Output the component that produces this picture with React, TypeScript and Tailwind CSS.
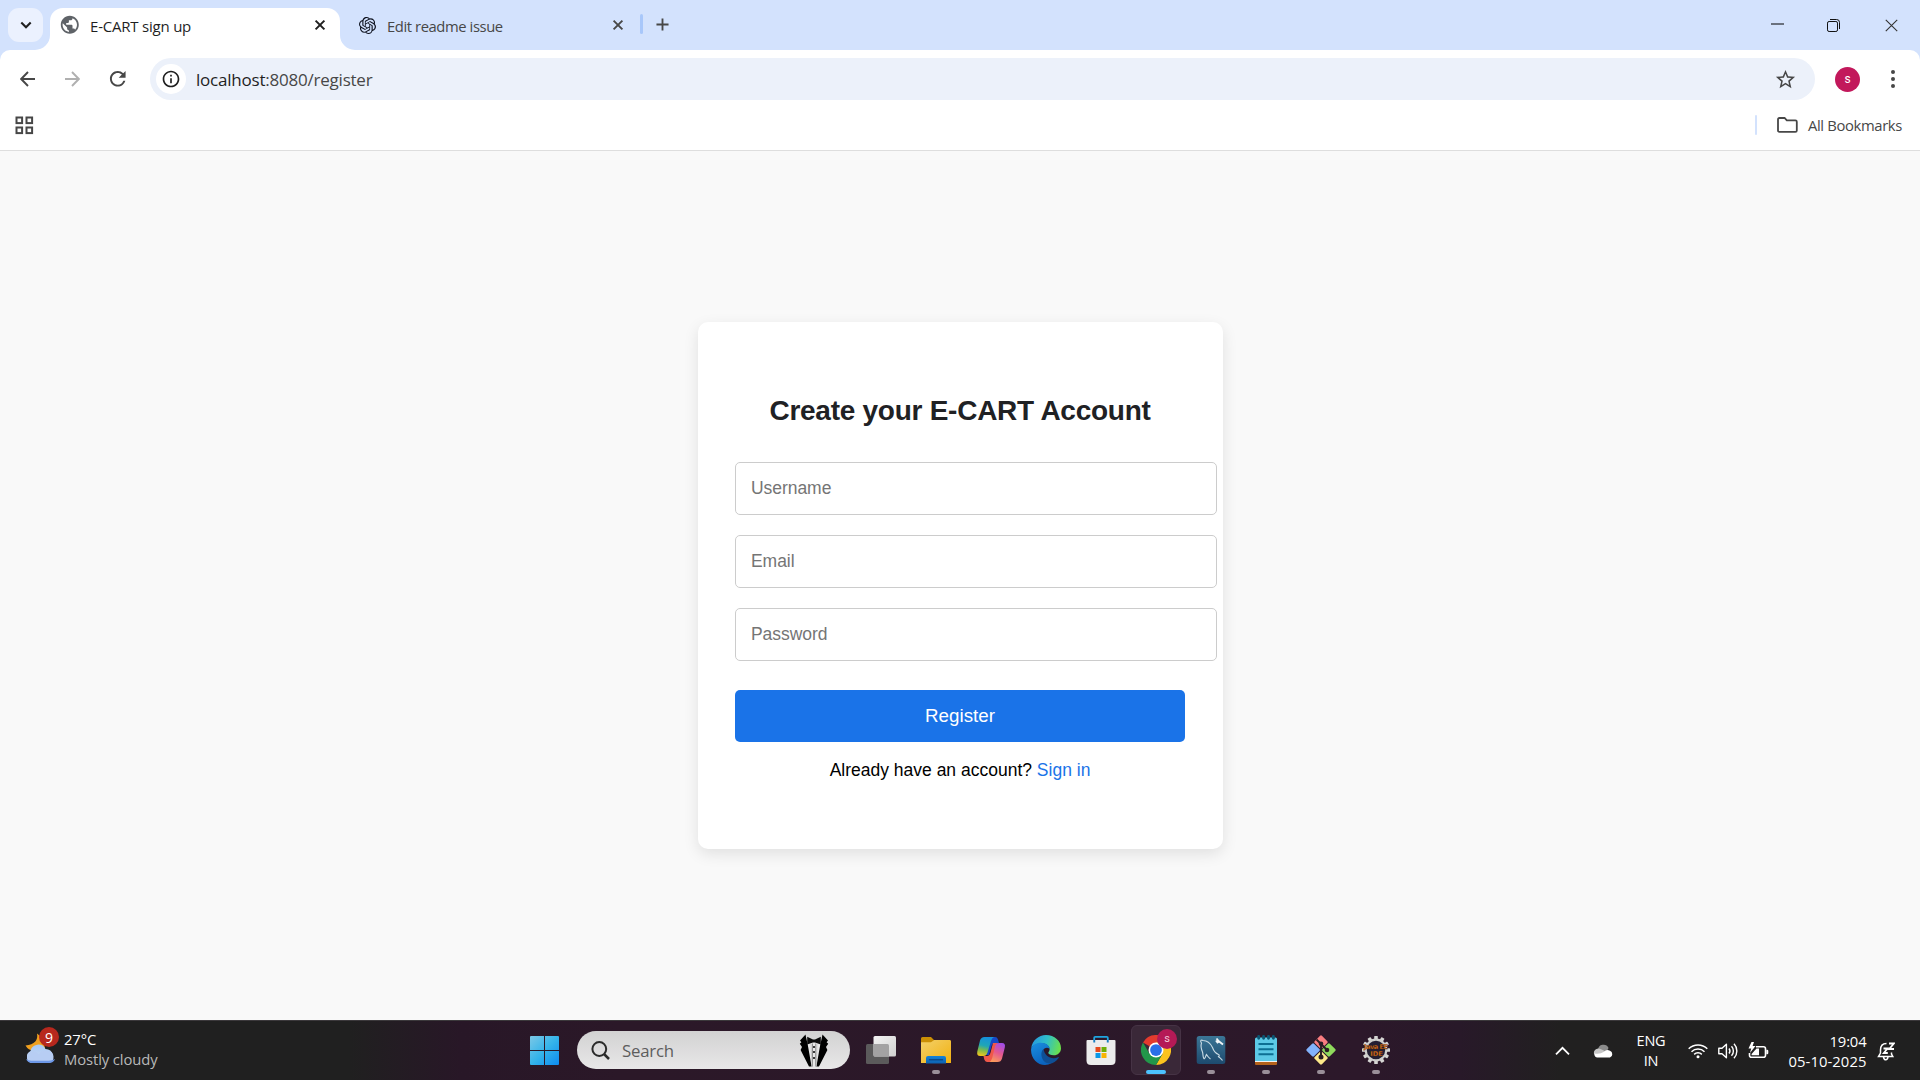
import type { ReactNode } from "react";
import { SiOpenai } from "react-icons/si";
import { MdPublic, MdInfoOutline, MdRefresh, MdStarBorder } from "react-icons/md";

const UI = "font-['Open_Sans','Noto_Sans',sans-serif]";

function Cross({ size, stroke, color }: { size: number; stroke: number; color: string }) {
  return (
    <svg width={size} height={size} viewBox="0 0 10 10" className="overflow-visible">
      <path d="M0.6 0.6 9.4 9.4M9.4 0.6 0.6 9.4" stroke={color} strokeWidth={(stroke * 10) / size} fill="none" />
    </svg>
  );
}

function TabStrip() {
  return (
    <div className="flex h-[50px] shrink-0 bg-[#d3e2fd]">
      <div className="mt-2 ml-2 flex h-[34px] w-[35px] items-center justify-center rounded-[11px] bg-[#ebf1fe]">
        <svg width="12" height="12" viewBox="0 0 12 12">
          <path d="M1.3 3.6 6 8.2 10.7 3.6" stroke="#1f1f1f" strokeWidth="2.1" fill="none" />
        </svg>
      </div>
      <div className="relative mt-[7.5px] ml-[7px] flex h-[42.5px] w-[290px] rounded-t-[13px] bg-white pb-2">
        <svg className="absolute bottom-0 -left-[15px]" width="15" height="15" viewBox="0 0 15 15">
          <path d="M15 0A15 15 0 0 1 0 15H15Z" fill="#fff" />
        </svg>
        <svg className="absolute -right-[15px] bottom-0" width="15" height="15" viewBox="0 0 15 15">
          <path d="M0 0A15 15 0 0 0 15 15H0Z" fill="#fff" />
        </svg>
        <div className="flex w-full items-center pl-[9px]">
          <MdPublic size={21.6} color="#5f6368" />
          <span className="ml-[9.5px] flex-1 pt-[2px] text-[15px] tracking-[-0.22px] whitespace-nowrap text-[#1f1f1f]">E-CART sign up</span>
          <span className="mr-[15px] flex">
            <Cross size={10} stroke={2} color="#1f1f1f" />
          </span>
        </div>
      </div>
      <div className="flex h-[50px] w-[300px] items-center pl-[18.500px]">
        <SiOpenai size={17} color="#0b0f1c" />
        <span className="ml-[11.5px] flex-1 pt-[2px] text-[14.800px] tracking-[-0.420px] whitespace-nowrap text-[#474747]">Edit readme issue</span>
        <span className="mr-[17.500px] flex">
          <Cross size={10} stroke={1.9} color="#474747" />
        </span>
      </div>
      <div className="mt-[14px] h-5 w-[2.5px] rounded-full bg-[#a8c7fa]" />
      <svg className="mt-[18px] ml-[13.500px]" width="13" height="13" viewBox="0 0 14 14">
        <path d="M7 .5V13.5M.5 7H13.5" stroke="#474747" strokeWidth="2" />
      </svg>
      <div className="ml-auto flex h-[50px] items-center pr-[22.500px]">
        <svg className="mr-[43px]" width="13" height="13" viewBox="0 0 13 13">
          <path d="M0 5H13" stroke="#000" />
        </svg>
        <svg className="mr-[44.5px]" width="13" height="13" viewBox="0 0 13 13" fill="none">
          <rect x=".5" y="2.5" width="10" height="10" rx="1.6" stroke="#111" />
          <path d="M3 .5H9.6A2.9 2.9 0 0 1 12.5 3.4V10" stroke="#111" />
        </svg>
        <Cross size={13} stroke={1.1} color="#333" />
      </div>
    </div>
  );
}

function AddressBar() {
  return (
    <div className="bg-[#d3e2fd]">
      <div className="flex h-[58px] items-center rounded-t-[10px] bg-white pl-5">
        <svg width="15" height="16" viewBox="0 0 15 16" fill="none">
          <path d="M15 8H1.5M8 1 1.2 8 8 15" stroke="#474747" strokeWidth="1.9" />
        </svg>
        <svg className="ml-[30px]" width="15" height="16" viewBox="0 0 15 16" fill="none">
          <path d="M0 8H13.5M7 1 13.8 8 7 15" stroke="#b0b0b0" strokeWidth="1.9" />
        </svg>
        <MdRefresh className="ml-[25.5px]" size={23.5} color="#474747" />
        <div className="ml-[21px] flex h-[42px] w-[1665px] items-center rounded-full bg-[#ecf1fa] pl-1.5">
          <span className="flex size-[30px] items-center justify-center rounded-full bg-white">
            <MdInfoOutline size={20} color="#1f1f1f" />
          </span>
          <span className="ml-[10px] flex-1 pt-[2px] text-[17px] tracking-[-0.220px] text-[#474747]">
            <span className="text-[#1f1f1f]">localhost</span>:8080/register
          </span>
          <MdStarBorder className="mr-[18px]" size={23} color="#474747" />
        </div>
        <span className="ml-5 flex size-[25px] items-center justify-center rounded-full bg-[#c2185b] font-['Roboto',sans-serif] text-[12px] text-white">s</span>
        <svg className="ml-[29.500px]" width="6" height="20" viewBox="0 0 6 20" fill="#474747">
          <circle cx="3" cy="3" r="2" />
          <circle cx="3" cy="10" r="2" />
          <circle cx="3" cy="17" r="2" />
        </svg>
      </div>
    </div>
  );
}

function BookmarksBar() {
  return (
    <div className="flex h-[43px] shrink-0 border-b border-[#dedede] bg-white pl-[15px]">
      <svg className="mt-2" width="19" height="19" viewBox="0 0 19 19" fill="none" stroke="#474747" strokeWidth="2">
        <rect x="1.5" y="1.5" width="5.6" height="5.6" />
        <rect x="11.5" y="1.5" width="5.6" height="5.6" />
        <rect x="1.5" y="11.5" width="5.6" height="5.6" />
        <rect x="11.5" y="11.5" width="5.6" height="5.6" />
      </svg>
      <div className="ml-auto flex h-[34px] items-center pr-[18px]">
        <span className="h-5 w-[2.5px] rounded-full bg-[#d3e2fd]" />
        <svg className="ml-[19.5px]" width="21" height="16" viewBox="0 0 21 16" fill="none">
          <path d="M1 2.4Q1 1 2.4 1H7.6L9.8 3.4H18.4Q19.8 3.4 19.8 4.8V13.4Q19.8 14.8 18.4 14.8H2.4Q1 14.8 1 13.4Z" stroke="#474747" strokeWidth="1.8" />
        </svg>
        <span className="ml-[10px] text-[14.800px] tracking-[-0.350px] text-[#474747]">All Bookmarks</span>
      </div>
    </div>
  );
}

function Field({ label, type }: { label: string; type: string }) {
  return (
    <input
      type={type}
      placeholder={label}
      className="h-[53px] w-[482px] max-w-none shrink-0 rounded-[5px] border border-[#ccc] bg-white px-[15.500px] text-[17.5px] tracking-[-0.050px] outline-none placeholder:text-[#757575]"
    />
  );
}

function RegisterPage() {
  return (
    <main className="flex min-h-0 flex-1 items-center justify-center bg-[#f9f9f9] font-['Liberation_Sans',Arial,sans-serif]">
      <form className="flex h-[527px] w-[525px] flex-col rounded-[10px] bg-white px-[37px] pt-[70px] shadow-[0_5px_15px_rgba(0,0,0,0.1)]">
        <h1 className="text-center text-[28px] leading-[38px] font-bold tracking-[-0.260px] text-[#202124]">Create your E-CART Account</h1>
        <div className="mt-8 flex flex-col gap-5">
          <Field label="Username" type="text" />
          <Field label="Email" type="email" />
          <Field label="Password" type="password" />
        </div>
        <button type="button" className="mt-[29px] h-[52px] w-[450px] rounded-[5px] bg-[#1a73e8] pl-px text-[18.75px] text-white">
          Register
        </button>
        <p className="mt-[17px] text-center text-[17.5px] leading-[22px] text-black">
          Already have an account? <a className="text-[#1a73e8]">Sign in</a>
        </p>
      </form>
    </main>
  );
}

function TuxedoIcon() {
  return (
    <svg width="30" height="33" viewBox="0 0 30 33">
      <path d="M8 3 15 7 22 3 21 32H10Z" fill="#e9e9e9" />
      <path d="M6.5 .5 1 6.5 2.4 8.2 .8 9.8 3 13 1.6 16 10 32.5H12.6L8.8 11 7.2 4Z" fill="#000" />
      <path d="M23.5 .5 29 6.5 27.6 8.2 29.2 9.8 27 13 28.4 16 20 32.5H17.4L21.2 11 22.8 4Z" fill="#000" />
      <path d="M8.2 2.8 14 5.6H16L21.8 2.8V10.6L16 8.4H14L8.2 10.6Z" fill="#0a0a0a" />
      <path d="M13.4 9.5V32.5M16.8 9.5V32.5" stroke="#777" strokeWidth=".9" />
      <path d="M12 10 13 32M18 10 17.4 32" stroke="#bbb" strokeWidth=".6" />
      <circle cx="15" cy="13" r="1" />
      <circle cx="15" cy="18" r="1" />
      <circle cx="15" cy="24" r="1" />
    </svg>
  );
}

function TaskViewIcon() {
  return (
    <svg width="30" height="30" viewBox="0 0 30 30">
      <defs>
        <linearGradient id="tv" x1="0" y1="0" x2="1" y2="1">
          <stop offset="0" stopColor="#f4f4f4" />
          <stop offset="1" stopColor="#cfcfcf" />
        </linearGradient>
      </defs>
      <rect x="0" y="9" width="23" height="20" rx="1.5" fill="#5b5a5b" />
      <rect x="7.5" y="1" width="22.5" height="20.5" rx="1.5" fill="url(#tv)" />
      <path d="M7.5 9H21.5Q23 9 23 10.5V21.5H9Q7.5 21.5 7.5 20Z" fill="#a3a2a3" />
    </svg>
  );
}

function ExplorerIcon() {
  return (
    <svg width="30" height="30" viewBox="0 0 30 30">
      <defs>
        <linearGradient id="fo" x1="0" y1="0" x2="1" y2="1">
          <stop offset="0" stopColor="#f3d06a" />
          <stop offset="1" stopColor="#f2b10f" />
        </linearGradient>
        <linearGradient id="fb" x1="0" y1="0" x2="0" y2="1">
          <stop offset="0" stopColor="#1482d8" />
          <stop offset="1" stopColor="#0d62b0" />
        </linearGradient>
      </defs>
      <path d="M0 3.5Q0 2 1.5 2H10L13 5H28Q30 5 30 7V12H0Z" fill="#cb8f05" />
      <path d="M0 7.2H10L13.2 5H28.7Q30 5 30 6.5V28H0Z" fill="url(#fo)" />
      <path d="M5 28.5V23Q5 21 7 21H23Q25 21 25 23V28.5Z" fill="url(#fb)" />
      <path d="M8.5 24.7H21.5" stroke="#0b4a8b" strokeWidth="1.4" strokeLinecap="round" />
    </svg>
  );
}

function CopilotIcon() {
  return (
    <svg width="30" height="30" viewBox="0 0 30 30">
      <defs>
        <linearGradient id="cl" x1=".5" y1="0" x2=".3" y2="1">
          <stop offset="0" stopColor="#1590dc" />
          <stop offset=".45" stopColor="#1fa6b6" />
          <stop offset=".7" stopColor="#7cbb4c" />
          <stop offset="1" stopColor="#f2c51c" />
        </linearGradient>
        <linearGradient id="cr" x1=".7" y1="0" x2=".3" y2="1">
          <stop offset="0" stopColor="#a24de8" />
          <stop offset=".5" stopColor="#e4588f" />
          <stop offset="1" stopColor="#fb9a5a" />
        </linearGradient>
      </defs>
      <path d="M14 2H19Q21.3 2 22 4.4L23 8H19Q16.5 8 15.6 11L13 20H8Z" fill="#1648c6" />
      <path d="M16 27H11Q9 27 8.3 24.6L7.5 21H11Q13.5 21 14.4 18L17 8H22Z" fill="#f0584a" />
      <path d="M8.5 2H18Q15.8 3 15 6L11.5 17.5Q10.3 21 7.5 21H4.2Q.5 21 1.3 16.5L4 5.5Q5 2 8.5 2Z" fill="url(#cl)" />
      <path d="M21.5 27H13.5Q15.4 26 16.2 23L19 11.5Q20 8 23 8H26Q29.8 8 28.8 12.5L26 23.5Q25 27 21.5 27Z" fill="url(#cr)" />
    </svg>
  );
}

function EdgeIcon() {
  return (
    <svg width="30" height="30" viewBox="0 0 30 30">
      <defs>
        <linearGradient id="e1" x1="0" y1=".3" x2="1" y2=".5">
          <stop offset="0" stopColor="#2697e0" />
          <stop offset=".5" stopColor="#2fbfc8" />
          <stop offset="1" stopColor="#6be04c" />
        </linearGradient>
        <linearGradient id="e2" x1="0" y1="0" x2=".5" y2="1">
          <stop offset="0" stopColor="#1a8fe0" />
          <stop offset="1" stopColor="#0b62be" />
        </linearGradient>
      </defs>
      <path d="M.2 13C1.3 5.500 7.500 0 15 0 23.500 0 30 6 30 13.200 30 17.500 26.800 20.200 22.800 20.200 19.500 20.200 17.300 19 17.300 17.700 17.300 17 18.600 16.200 18.600 14.200 18.600 11.200 15.500 8.200 10.600 8.200 5.600 8.200 1.800 10.800 .2 13Z" fill="url(#e1)" />
      <path d="M.1 14C1 10.300 4.900 7.800 9.800 7.800 15 7.800 18.600 10.600 18.600 14 16.800 12 13 12.500 11.700 16 10 21.500 14.500 27.500 21 27.800 18.500 29.600 16 30 14 30 6 29.800-.5 23 .1 14Z" fill="url(#e2)" />
      <path d="M12.600 13.800C9.300 17 9.600 23.400 14 27 18.500 30.200 24.500 27.700 27.600 22.900 28 22.300 27.500 21.900 27 22.200 21 25 13.300 21.500 12.600 13.800Z" fill="#0f4f95" />
    </svg>
  );
}

function StoreIcon() {
  return (
    <svg width="30" height="30" viewBox="0 0 30 30">
      <path d="M8.200 8V2.800Q8.200 1.800 9.200 1.800H20.800Q21.800 1.800 21.800 2.800V8" stroke="#1fa5e0" strokeWidth="1.800" fill="none" />
      <path d="M.5 6Q.5 5 1.500 5H28.500Q29.500 5 29.500 6V25.500Q29.500 30 25 30H5Q.5 30 .5 25.500Z" fill="#ececec" />
      <path d="M7.300 5H9.200V7.500H7.300ZM20.800 5H22.700V7.500H20.800Z" fill="#1a7fc0" />
      <rect x="9.500" y="12" width="5" height="5" fill="#e64a1c" />
      <rect x="15.500" y="12" width="5" height="5" fill="#6faf06" />
      <rect x="9.500" y="18" width="5" height="5" fill="#0a98e6" />
      <rect x="15.500" y="18" width="5" height="5" fill="#f8b404" />
    </svg>
  );
}

function ChromeIcon() {
  return (
    <svg width="30" height="30" viewBox="0 0 48 48">
      <path d="M24 24 3.200 12A24 24 0 0 1 44.800 12H24Z" fill="#e33b2e" />
      <path d="M24 12H44.800A24 24 0 0 1 24 48L34.400 30Z" fill="#fcc31e" />
      <path d="M34.400 30 24 48A24 24 0 0 1 3.200 12L13.600 30Z" fill="#22974a" />
      <path d="M24 12H44.800L34.400 30Z" fill="#fcc31e" />
      <circle cx="24" cy="24" r="12" fill="#fff" />
      <circle cx="24" cy="24" r="9.400" fill="#2a6fe8" />
    </svg>
  );
}

function MySqlIcon() {
  return (
    <svg width="30" height="30" viewBox="0 0 30 30">
      <defs>
        <linearGradient id="my" x1="0" y1="0" x2="0" y2="1">
          <stop offset="0" stopColor="#3b7696" />
          <stop offset="1" stopColor="#1d4a6e" />
        </linearGradient>
      </defs>
      <rect x=".7" y="1" width="28.600" height="28" rx="2.500" fill="url(#my)" />
      <path d="M8 24C6.500 21.500 7.300 19.500 6.500 17 5 13.500 4.500 11 5.500 8 4 6 4.500 4.500 7 5.500 11 5.500 14.500 8.500 16.500 12.500 17.500 15.500 19 18 22.500 19.500 24 20.300 23 21.200 22.500 21.500 24 23 25.500 24 26.500 25.500M8 24C10 23 9.500 20.500 10.500 19.500 12 22 13 23 14.500 24" fill="none" stroke="#c9dbe4" strokeWidth="1.100" />
      <path d="M20.500 3.500 23 6.500 21.500 7.500 20 5.500M22.500 6 27 9.500" stroke="#f1f5f7" strokeWidth="1.900" fill="none" />
    </svg>
  );
}

function NotepadIcon() {
  return (
    <svg width="24" height="30" viewBox="0 0 24 30">
      <rect x="1" y="25.500" width="22" height="4.500" rx="1" fill="#b4611a" />
      <rect x="1" y="24.500" width="22" height="2.500" fill="#f2f2f2" />
      <path d="M1 4Q1 2.500 2.500 2.500H21.500Q23 2.500 23 4V26H1Z" fill="#5cc9e6" />
      <path d="M4.500 9H19.500M4.500 14.300H19.500M4.500 19.300H19.500" stroke="#0d6f93" strokeWidth="2" />
      <path d="M4.700 1.500V3.200M9.600 1.500V3.200M14.500 1.500V3.200M19.400 1.500V3.200" stroke="#0b5875" strokeWidth="2.900" strokeLinecap="round" />
    </svg>
  );
}

function GitIcon() {
  return (
    <svg width="30" height="30" viewBox="0 0 30 30">
      <g transform="rotate(45 15 15)">
        <rect x="4.300" y="4.300" width="10.200" height="10.200" rx="1.300" fill="#f97d80" />
        <rect x="15.500" y="4.300" width="10.200" height="10.200" rx="1.300" fill="#8fd95c" />
        <rect x="4.300" y="15.500" width="10.200" height="10.200" rx="1.300" fill="#82b2fb" />
        <rect x="15.500" y="15.500" width="10.200" height="10.200" rx="1.300" fill="#fde98a" />
      </g>
      <path d="M10.500 4.500 15 9V22M15 9 21 15" stroke="#2b1d24" strokeWidth="1.900" fill="none" />
      <circle cx="15" cy="8.800" r="2.300" fill="#2b1d24" />
      <circle cx="15" cy="22" r="2.500" fill="#2b1d24" />
      <circle cx="21" cy="15" r="2.300" fill="#2b1d24" />
    </svg>
  );
}

const TEETH = [0, 30, 60, 90, 120, 150, 180, 210, 240, 270, 300, 330];

function EclipseIcon() {
  return (
    <svg width="30" height="30" viewBox="0 0 30 30">
      {TEETH.map((a) => (
        <rect key={a} x="13.200" y="1" width="3.600" height="5" rx=".6" fill="#d6d6d4" transform={`rotate(${a} 15 15)`} />
      ))}
      <circle cx="15" cy="15" r="10.300" fill="#241f33" stroke="#cfcfcd" strokeWidth="2.200" />
      <g fill="#f0801e" fontFamily="DejaVu Sans, sans-serif" fontWeight="700" fontSize="6.600" textAnchor="middle" stroke="#3a1a08" strokeWidth=".3">
        <text x="15" y="14" textLength="24">Java EE</text>
        <text x="15.500" y="20.500">IDE</text>
      </g>
    </svg>
  );
}

function AppCell({ children, running, active }: { children: ReactNode; running?: boolean; active?: boolean }) {
  return (
    <div className="flex w-[55px] justify-center">
      <div className={active ? "relative mt-[5px] flex h-[50px] w-[50px] justify-center rounded-md border border-[#463345] bg-[#3a2838] pt-[9px]" : "relative mt-[5px] flex h-[50px] w-[50px] justify-center pt-[10px]"}>
        {children}
        {active && (
          <>
            <span className="absolute top-[3px] left-[25px] flex size-5 items-center justify-center rounded-full bg-[#b51a56] font-['Roboto',sans-serif] text-[11px] text-[#f3c9d8]">s</span>
            <span className="absolute bottom-0 h-1 w-5 rounded-full bg-[#4cc2ff]" />
          </>
        )}
        {running && <span className="absolute bottom-[1px] h-1 w-2 rounded-full bg-[#9a8f99]" />}
      </div>
    </div>
  );
}

function Tray() {
  return (
    <div className="ml-auto flex h-[60px] items-center pr-[25px] text-white">
      <svg width="15" height="10" viewBox="0 0 15 10" fill="none">
        <path d="M1 8.300 7.500 1.800 14 8.300" stroke="#fff" strokeWidth="1.800" />
      </svg>
      <svg className="ml-[22.500px]" width="21" height="14" viewBox="0 0 21 14">
        <path d="M5 6A5.500 5.500 0 0 1 15.500 4L13 9Z" fill="#8b8b8b" />
        <path d="M1 10A4.600 4.600 0 0 1 8 5.200L16 9 5 13Z" fill="#c6c6c6" />
        <path d="M4 13.500A3.500 3.500 0 0 1 1.500 9.500Q7 10.500 11 7.800 13.500 4.800 17 6.800A3.600 3.600 0 0 1 17 13.500Z" fill="#fff" />
      </svg>
      <div className="ml-[21.500px] flex w-[32px] flex-col items-center text-[14.500px] leading-5 tracking-[-0.200px]">
        <span>ENG</span>
        <span>IN</span>
      </div>
      <svg className="ml-[21px]" width="20" height="16" viewBox="0 0 20 16" fill="none" stroke="#fff" strokeWidth="1.500">
        <path d="M.7 5.800A13 13 0 0 1 19.300 5.800M3.500 8.700A9.200 9.200 0 0 1 16.500 8.700M6.200 11.400A5.400 5.400 0 0 1 13.800 11.400" />
        <circle cx="10" cy="13.800" r="1.500" fill="#fff" stroke="none" />
      </svg>
      <svg className="ml-[10px]" width="20" height="18" viewBox="0 0 20 18" fill="none" stroke="#fff" strokeWidth="1.400">
        <path d="M.8 6.200H4L8.400 2.200V15.800L4 11.800H.8Z" strokeLinejoin="round" />
        <path d="M11 6.500A4 4 0 0 1 11 11.500M13.500 4.200A7 7 0 0 1 13.500 13.800M16 1.800A10.500 10.500 0 0 1 16 16.200" />
      </svg>
      <svg className="ml-[9.500px]" width="21" height="18" viewBox="0 0 21 18" fill="none">
        <path d="M8 4.800H15.500Q17.500 4.800 17.500 6.800V13.200Q17.500 15.200 15.500 15.200H3.500Q1.500 15.200 1.500 13.200V11" stroke="#fff" strokeWidth="1.600" />
        <path d="M18.300 7.800H19.200Q20.300 7.800 20.300 9V11Q20.300 12.200 19.200 12.200H18.300Z" fill="#fff" />
        <path d="M8.500 6.600H11V13.300H3.600V12Z" fill="#fff" />
        <path d="M3.500 0 .5 6.500H3.200L2 11 7.500 4H4.600L6 0Z" fill="#fff" />
      </svg>
      <div className="ml-[18px] flex w-[80px] flex-col items-end text-[14.800px] leading-5 whitespace-nowrap">
        <span className="-mt-px tracking-[-0.150px]">19:04</span>
        <span className="tracking-[0.080px]">05-10-2025</span>
      </div>
      <svg className="ml-[10.500px]" width="18" height="19" viewBox="0 0 18 19" fill="none" stroke="#fff" strokeWidth="1.500">
        <path d="M9.500 1.500Q3.500 1.500 3.500 8V11L1.500 14.500H15.800L14.500 12V10.500M6.500 15Q7 17.800 8.800 17.800 10.600 17.800 11 15" />
        <path d="M6.500 6.500H10.500L6.800 11H10.800M12 1.500H16.800L12.300 7H17" strokeWidth="1.800" />
      </svg>
    </div>
  );
}

function Taskbar() {
  return (
    <footer className="flex h-[60px] shrink-0 border-t border-[#3b383b] bg-linear-[90deg,#202020_0px,#202020_350px,#281727_460px,#2b1828_620px,#2c182a_1360px,#281929_1460px,#212020_1560px,#202020_1920px]">
      <div className="flex w-[530px] pl-[25px]">
        <div className="relative mt-[7px] h-[38px] w-[32px]">
          <svg width="32" height="38" viewBox="0 0 32 38">
            <defs>
              <linearGradient id="cd" x1="0" y1="0" x2="0" y2="1">
                <stop offset="0" stopColor="#a9c9f4" />
                <stop offset=".7" stopColor="#c3d5f3" />
                <stop offset="1" stopColor="#6f9bea" />
              </linearGradient>
            </defs>
            <path d="M12 5.500Q14 16 .5 17.500 3 22 9 23L20 20Q18 9 12 5.500Z" fill="#f0a01e" />
            <path d="M6.500 35A6.500 6.500 0 0 1 5.500 23 8 8 0 0 1 20.500 21 8 7.500 0 0 1 24 35Z" fill="url(#cd)" />
            <path d="M6 34.800A6 6 0 0 1 6 23.500Q11 23 14 26 17 22 23 23A6 6 0 0 1 24 34.800Z" fill="#b7cdf3" />
            <path d="M1 31Q3 35 7 35H24Q28.500 35 30 31 27 33 23 32.800H7Q3 33 1 31Z" fill="#6d98e8" />
          </svg>
          <span className="absolute -top-px left-[14px] flex size-5 items-center justify-center rounded-full bg-[#b7281e] text-[14px] text-white">9</span>
        </div>
        <div className="mt-[8px] ml-[7px] flex flex-col text-[14.800px] leading-5 tracking-[-0.100px]">
          <span className="text-white">27°C</span>
          <span className="text-[#b9b9b9]">Mostly cloudy</span>
        </div>
      </div>
      <svg className="mt-[15px]" width="29" height="29" viewBox="0 0 29 29">
        <defs>
          <linearGradient id="ws" x1="0" y1="0" x2="1" y2="1" gradientUnits="objectBoundingBox">
            <stop offset="0" stopColor="#7cc8e6" />
            <stop offset=".5" stopColor="#35b4ea" />
            <stop offset="1" stopColor="#0d8bf0" />
          </linearGradient>
        </defs>
        <path d="M1 0H14V14H0V1Q0 0 1 0ZM15 0H28Q29 0 29 1V14H15ZM0 15H14V29H1Q0 29 0 28ZM15 15H29V28Q29 29 28 29H15Z" fill="url(#ws)" />
      </svg>
      <div className="mt-[10px] ml-[18px] flex h-[38px] w-[273px] items-center rounded-full bg-linear-to-b from-[#d2d2d2] to-[#e8e7e8] pr-[21px] pl-[13.500px]">
        <svg width="19" height="19" viewBox="0 0 19 19" fill="none" stroke="#2b2b2b" strokeWidth="2">
          <circle cx="8.300" cy="8" r="6.900" />
          <path d="M13 13 18 18" strokeWidth="2.500" />
        </svg>
        <span className="ml-[12.500px] flex-1 pt-[2px] text-[16.800px] tracking-[-0.200px] text-[#5d5d5d]">Search</span>
        <TuxedoIcon />
      </div>
      <nav className="-mt-px ml-[3.500px] flex">
        <AppCell><TaskViewIcon /></AppCell>
        <AppCell running><ExplorerIcon /></AppCell>
        <AppCell><CopilotIcon /></AppCell>
        <AppCell><EdgeIcon /></AppCell>
        <AppCell><StoreIcon /></AppCell>
        <AppCell active><ChromeIcon /></AppCell>
        <AppCell running><MySqlIcon /></AppCell>
        <AppCell running><NotepadIcon /></AppCell>
        <AppCell running><GitIcon /></AppCell>
        <AppCell running><EclipseIcon /></AppCell>
      </nav>
      <Tray />
    </footer>
  );
}

export default function App() {
  return (
    <div className={`flex h-[1080px] w-[1920px] flex-col overflow-hidden ${UI}`}>
      <TabStrip />
      <AddressBar />
      <BookmarksBar />
      <RegisterPage />
      <Taskbar />
    </div>
  );
}
